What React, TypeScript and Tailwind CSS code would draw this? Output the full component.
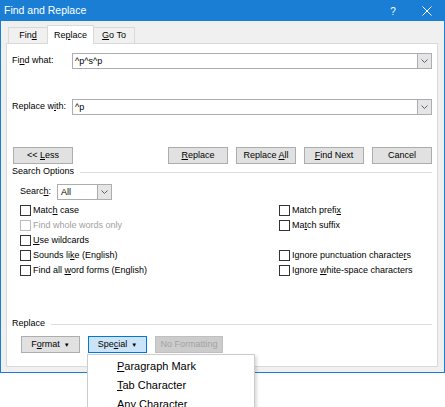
import React from "react";

function M({ t, i }: { t: string; i?: number }) {
  if (i === undefined) return <span>{t}</span>;
  return (
    <span className="whitespace-pre">
      {t.slice(0, i)}
      <span className="underline underline-offset-[1px]">{t[i]}</span>
      {t.slice(i + 1)}
    </span>
  );
}

function Chevron() {
  return (
    <svg width="7" height="4" viewBox="0 0 7 4" className="block">
      <path d="M0.5 0.5 L3.5 3.5 L6.5 0.5" fill="none" stroke="#606060" strokeWidth="1" />
    </svg>
  );
}

function Combo({ value }: { value: string }) {
  return (
    <div className="flex-1 h-[16px] flex border border-[#abadb3] bg-white">
      <div className="flex-1 pl-[2px] leading-[14px]">{value}</div>
      <div className="w-[14px] h-[14px] border-l border-[#acacac] bg-[#e5e5e5] flex items-center justify-center">
        <Chevron />
      </div>
    </div>
  );
}

function Btn({ children, w = "w-[60px]" }: { children: React.ReactNode; w?: string }) {
  return (
    <div className={`${w} h-[17px] border border-[#adadad] bg-[#e1e1e1] flex items-center justify-center leading-none`}>
      {children}
    </div>
  );
}

function Check({ t, i, disabled }: { t: string; i?: number; disabled?: boolean }) {
  return (
    <div className={`h-[15px] flex items-center gap-[2px] ${disabled ? "text-[#a0a0a0]" : ""}`}>
      <div className={`w-[11px] h-[11px] border bg-white ${disabled ? "border-[#bcbcbc]" : "border-[#333333]"}`} />
      <span className="leading-none">
        <M t={t} i={i} />
      </span>
    </div>
  );
}

function Caret() {
  return <span className="ml-[4px] text-[6px] leading-none">▼</span>;
}

export default function App() {
  return (
    <div className="relative w-[445px] h-[407px] bg-white overflow-hidden font-['Liberation_Sans',Arial,sans-serif] text-[9px] text-black">
      <div className="w-[445px] h-[373px] border border-[#1a7fd4] flex flex-col bg-[#f0f0f0]">
        {/* title bar */}
        <div className="h-[20px] bg-[#1a7fd4] flex items-center text-white">
          <div className="pl-[3px] text-[10.5px] flex-1">Find and Replace</div>
          <div className="w-[20px] text-center text-[10px] mr-[14px]">?</div>
          <div className="w-[20px] flex items-center justify-center mr-[7px]">
            <svg width="10" height="10" viewBox="0 0 10 10">
              <path d="M0.5 0.5 L9.5 9.5 M9.5 0.5 L0.5 9.5" stroke="white" strokeWidth="1" />
            </svg>
          </div>
        </div>
        {/* body */}
        <div className="flex-1 flex flex-col pl-[5px] pr-[6px] pt-[4px] pb-[5px]">
          <div className="h-[18px] flex items-end pl-[2px]">
            <div className="w-[40px] h-[16px] border border-b-0 border-[#d9d9d9] bg-[#f0f0f0] flex items-center justify-center leading-none">
              <M t="Find" i={3} />
            </div>
            <div className="relative z-10 w-[47px] h-[19px] -mb-px -ml-px border border-b-0 border-[#d9d9d9] bg-white flex items-center justify-center leading-none">
              <M t="Replace" i={2} />
            </div>
            <div className="w-[42px] h-[16px] -ml-px border border-b-0 border-[#d9d9d9] bg-[#f0f0f0] flex items-center justify-center leading-none">
              <M t="Go To" i={0} />
            </div>
          </div>
          <div className="flex-1 border border-[#d9d9d9] bg-white flex flex-col">
            <div className="mt-[9px] flex items-center px-[5px]">
              <div className="w-[60px]">
                <M t="Find what:" i={2} />
              </div>
              <Combo value="^p^s^p" />
            </div>
            <div className="mt-[30px] flex items-center px-[5px]">
              <div className="w-[60px]">
                <M t="Replace with:" i={9} />
              </div>
              <Combo value="^p" />
            </div>
            <div className="mt-[32px] flex pl-[6px] pr-[5px]">
              <Btn>
                <M t="<< Less" i={3} />
              </Btn>
              <div className="flex-1" />
              <div className="flex gap-[8px]">
                <Btn>
                  <M t="Replace" i={0} />
                </Btn>
                <Btn>
                  <M t="Replace All" i={8} />
                </Btn>
                <Btn>
                  <M t="Find Next" i={0} />
                </Btn>
                <Btn>
                  <M t="Cancel" />
                </Btn>
              </div>
            </div>
            <div className="mt-[1px] h-[14px] flex items-center pl-[5px] pr-[5px]">
              <span>Search Options</span>
              <div className="flex-1 h-px bg-[#dcdcdc] ml-[6px]" />
            </div>
            <div className="mt-[5px] flex items-center pl-[13px]">
              <div className="w-[37px]">
                <M t="Search:" i={5} />
              </div>
              <div className="w-[55px] h-[16px] flex border border-[#abadb3] bg-white">
                <div className="flex-1 pl-[3px] leading-[14px]">All</div>
                <div className="w-[14px] h-[14px] border-l border-[#acacac] bg-[#e5e5e5] flex items-center justify-center">
                  <Chevron />
                </div>
              </div>
            </div>
            <div className="mt-[3px] flex pl-[13px]">
              <div className="w-[259px] flex flex-col">
                <Check t="Match case" i={4} />
                <Check t="Find whole words only" disabled />
                <Check t="Use wildcards" i={0} />
                <Check t="Sounds like (English)" i={9} />
                <Check t="Find all word forms (English)" i={9} />
              </div>
              <div className="flex flex-col">
                <Check t="Match prefix" i={11} />
                <Check t="Match suffix" i={2} />
                <div className="h-[15px]" />
                <Check t="Ignore punctuation characters" i={27} />
                <Check t="Ignore white-space characters" i={7} />
              </div>
            </div>
            <div className="mt-[39px] h-[14px] flex items-center pl-[5px] pr-[5px]">
              <span>Replace</span>
              <div className="flex-1 h-px bg-[#dcdcdc] ml-[6px]" />
            </div>
            <div className="mt-[5px] flex gap-[8px] pl-[14px]">
              <Btn w="w-[59px]">
                <M t="Format" i={1} />
                <Caret />
              </Btn>
              <div className="w-[59px] h-[17px] border border-[#0078d7] bg-[#cce4f7] flex items-center justify-center leading-none">
                <M t="Special" i={3} />
                <Caret />
              </div>
              <div className="w-[68px] h-[17px] border border-[#bfbfbf] bg-[#cccccc] flex items-center justify-center leading-none text-[#a3a3a3]">
                <span>No Formatting</span>
              </div>
            </div>
          </div>
        </div>
      </div>
      {/* dropdown menu */}
      <div className="absolute left-[87px] top-[354px] w-[168px] h-[70px] border border-[#cccccc] bg-white pt-[2px] text-[11px] shadow-[2px_2px_3px_rgba(0,0,0,0.15)]">
        <div className="h-[19px] flex items-center pl-[29px]">
          <M t="Paragraph Mark" i={0} />
        </div>
        <div className="h-[19px] flex items-center pl-[29px]">
          <M t="Tab Character" i={0} />
        </div>
        <div className="h-[19px] flex items-center pl-[29px]">
          <M t="Any Character" i={0} />
        </div>
      </div>
    </div>
  );
}
